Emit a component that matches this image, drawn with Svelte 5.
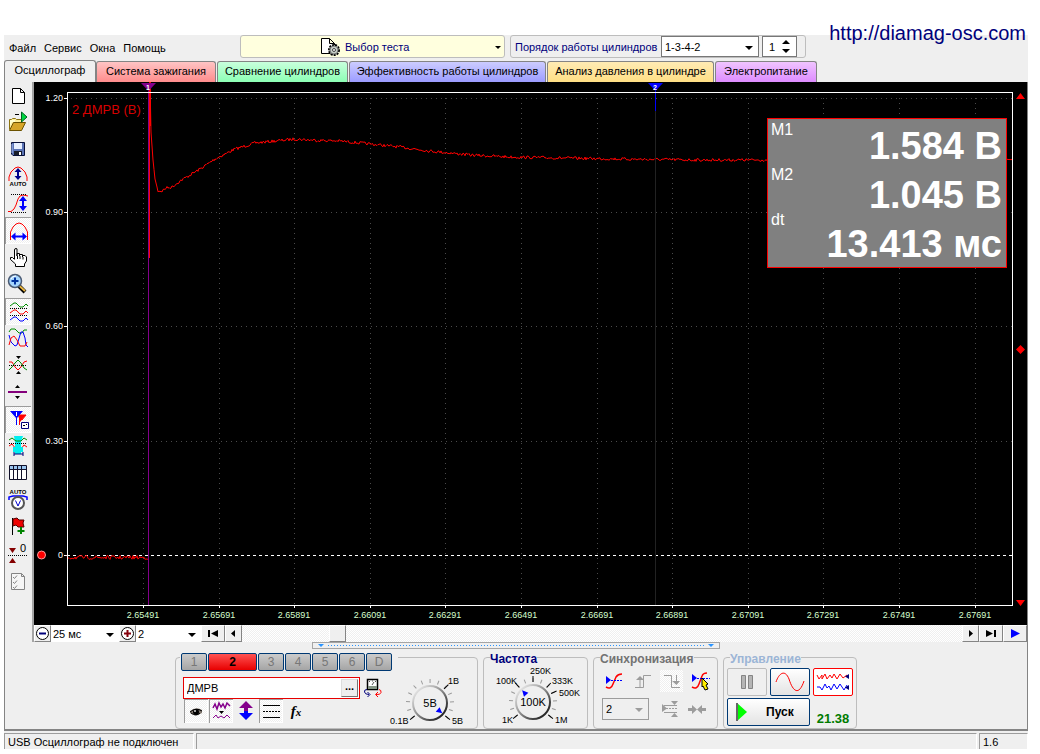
<script>
  const tabs = [
    { name: 'Осциллограф', top: '#efefef', bottom: '#efefef', width: 92 },
    { name: 'Система зажигания', top: '#ffc4c4', bottom: '#ff8c8c', width: 120 },
    { name: 'Сравнение цилиндров', top: '#c8ffdc', bottom: '#8cffb4', width: 131 },
    { name: 'Эффективность работы цилиндров', top: '#ccccff', bottom: '#9c9cff', width: 197 },
    { name: 'Анализ давления в цилиндре', top: '#ffebb4', bottom: '#ffdf84', width: 167 },
    { name: 'Электропитание', top: '#f0c4ff', bottom: '#de8cff', width: 102 }
  ];
  let activeTab = $state(0);

  // left toolbar, every icon on a 24x24 grid
  const tools = [
    { label: 'Новый', icon: '<path d="M6.500 5.500H14.500L18.500 9.500V20.500H6.500ZM14.500 5.500V9.500H18.500" fill="#fff" stroke="#000"/>' },
    { label: 'Открыть', icon: '<path d="M3.500 19.500V9.500H5.500L6.500 8.500H9.500L10.500 9.500H15.500V12.500" fill="#ffef9c" stroke="#8c7310"/><path d="M3.500 20.500L7.500 12.500H19.500L15.500 20.500Z" fill="#d6a529" stroke="#6b5200"/><path d="M4 10H9V12H6L4 16Z" fill="#ffffce"/><path d="M15.500 2V12L21 7Z" fill="#00d642" stroke="#006321"/><path d="M9 4.500H13" stroke="#000"/>' },
    { label: 'Сохранить', icon: '<path d="M5.500 5.500H18.500V18.500H7L5.500 17Z" fill="#5a73b5" stroke="#08103a"/><path d="M8 6H16V12H8Z" fill="#e7efff"/><path d="M8 14H16V18H8Z" fill="#181c29"/><path d="M13 15H15V18H13Z" fill="#fff"/><path d="M6 7V16" stroke="#a5bdf7"/>' },
    { label: 'Авто по амплитуде', icon: '<path d="M3 17V13L5 8L9 4L12 3L15 4L19 8L21 13V17" fill="none" stroke="#f00"/><path d="M12 5V15" stroke="#00008c" stroke-width="2"/><path d="M8.500 8L12 4L15.500 8ZM8.500 12L12 16L15.500 12Z" fill="#00008c"/><text x="12" y="22" font-size="6" font-weight="700" text-anchor="middle">AUTO</text>' },
    { label: 'Размах', icon: '<path d="M2 20.500H5L8 18L10 14L12 8L14 5L17 4L22 5" fill="none" stroke="#f00"/><path d="M5 3.500H20M5 21.500H20" stroke="#000" stroke-dasharray="1 1"/><path d="M17 7V18" stroke="#00f" stroke-width="2"/><path d="M13 10L17 5L21 10ZM13 15L17 20L21 15Z" fill="#00f"/>' },
    { label: 'Длительность', pressed: true, icon: '<path d="M4.500 22V14L7 9L10 6L13 5L16 6L19 9L21.500 14V22" fill="none" stroke="#f00"/><path d="M7 18.500H19" stroke="#00f" stroke-width="2"/><path d="M9.500 14.500L5 18.500L9.500 22.500ZM16.500 14.500L21 18.500L16.500 22.500Z" fill="#00f"/>' },
    { label: 'Рука', icon: '<path d="M8.500 14V5Q8.500 3.500 10 3.500T11 5V11V8.500H13.500V11V9.500H16.500V12V10.500H19L20.500 12V16L18.500 19V21.500H9.500V19L4.500 14.500V12.500H6.500L8.500 14.500M11.500 11V14M14 11V14M17 12V14.500" fill="#fff" stroke="#000"/>' },
    { label: 'Лупа', icon: '<path d="M13 14L19 20" stroke="#000" stroke-width="4"/><path d="M13.500 14L19 19" stroke="#e7b542" stroke-width="2"/><circle cx="9" cy="9" r="6.500" fill="#a5d6ff" stroke="#4a5a73" stroke-width="1.500"/><path d="M5 7Q6 4 10 4" stroke="#fff" fill="none"/><path d="M9 5.500V12.500M5.500 9H12.500" stroke="#00319c" stroke-width="2"/>' },
    { label: 'Каналы раздельно', pressed: true, icon: '<path d="M4 7L8 4H10L14 8H17L20 5L22 7" fill="none" stroke="#008c00"/><path d="M4 14L8 11H10L14 15H17L20 12L22 14" fill="none" stroke="#f00"/><path d="M4 21L8 18H10L14 22H17L20 19L22 21" fill="none" stroke="#00f"/><path d="M4 9.500H22M4 16.500H22" stroke="#000" stroke-dasharray="1 1"/>' },
    { label: 'Каналы вместе', icon: '<path d="M3 6L5 3H9L13 7H16L18 4H21" fill="none" stroke="#008c00"/><path d="M3 9L5 16L9 20L11 19L14 9L15 6H17L19 12L20 19L22 21" fill="none" stroke="#00f"/><path d="M3 19L5 12L8 10L11 14L14 20H19L21 16" fill="none" stroke="#f00"/>' },
    { label: 'Инверсия', icon: '<path d="M3 9H6L9 14L12 17L15 14L18 9L21 8" fill="none" stroke="#f00"/><path d="M3 17L6 14L9 10L12 7L15 10L18 15L21 17" fill="none" stroke="#008c00"/><path d="M3 12.500H21" stroke="#000" stroke-dasharray="1 1"/><path d="M10 3H15L12.500 6ZM10 21H15L12.500 18Z" fill="#000"/>' },
    { label: 'Смещение', icon: '<path d="M2 12H21" stroke="#84007b" stroke-width="2"/><path d="M9 8H14L11.500 5ZM9 16H14L11.500 19Z" fill="#000"/>' },
    { label: 'Метки', pressed: true, icon: '<path d="M12 8H20L16 13Z" fill="#fff" stroke="#f00"/><path d="M12 8H20L14 15Z" fill="#f00"/><path d="M4 4H17L11 11V18H10V11Z" fill="#00f"/><path d="M10.500 5V9" stroke="#fff"/><path d="M13.500 11V18" stroke="#f00"/><path d="M15.500 15.500H22.500V21.500H15.500Z" fill="#fff" stroke="#00007b"/><path d="M17 18.500H19M20 17.500H21" stroke="#000"/>' },
    { label: 'Область', icon: '<path d="M8 2H17L15 8V20H9V8Z" fill="#00efef"/><path d="M3 6L6 4L10 7H15L18 4L21 6" fill="none" stroke="#008c00"/><path d="M3 12L6 10L10 15H15L18 11L21 13" fill="none" stroke="#f00"/><path d="M3 9.500H21" stroke="#000" stroke-dasharray="1 1"/><path d="M7 13H17V18H7Z" fill="#00efef"/><path d="M8 18V22M17 18V22M8 20H17" stroke="#00007b"/>' },
    { label: 'Таблица', icon: '<path d="M3.500 4.500H20.500V18.500H3.500Z" fill="#fff" stroke="#101029"/><path d="M4 5H20V8H4Z" fill="#9cc6ef"/><path d="M3 8.500H21M7.500 5V18M11.500 5V18M15.500 5V18" stroke="#101029"/>' },
    { label: 'Авто', icon: '<text x="12" y="6" font-size="6" font-weight="700" text-anchor="middle">AUTO</text><path d="M3 12V9L7 8H17L21 9V12" fill="none" stroke="#00f" stroke-width="1.500"/><circle cx="12" cy="15" r="6" fill="#fff" stroke="#555" stroke-width="2"/><path d="M9.500 12.500L12 18L14.500 12.500" fill="none" stroke="#00c"/>' },
    { label: 'Флаг', icon: '<path d="M6.500 3V20" stroke="#000"/><path d="M7 4L11 3L13 5H18L17 8L18 12H12L10 10L7 11Z" fill="#ef0000" stroke="#520000"/><path d="M15 12V19M11.500 16H18.500" stroke="#008400" stroke-width="2"/>' },
    { label: 'Ноль', icon: '<path d="M3 6H10L6.500 11ZM3 21H10L6.500 16Z" fill="#840000"/><path d="M2 13.500H21" stroke="#000" stroke-dasharray="1 1"/><text x="14" y="10" font-size="11">0</text>' },
    { label: 'Отчёт', icon: '<path d="M5.500 4.500H15.500L18.500 7.500V20.500H5.500ZM15.500 4.500V7.500H18.500" fill="#f6f6f6" stroke="#848484"/><path d="M7 8L8.500 9.500L11 6.500M7 13L8.500 14.500L11 11.500M7 18L8.500 19.500L11 16.500" fill="none" stroke="#848484"/>' }
  ];

  // scope: 993x543 drawing, plot frame inside it
  const plot = { left: 33, right: 978, top: 10, bottom: 523 };
  const zeroY = 473;
  const yOf = (volts) => Math.round(zeroY - volts * 381);
  const levels = [
    { volts: 1.2, text: '1.20' },
    { volts: 0.9, text: '0.90' },
    { volts: 0.6, text: '0.60' },
    { volts: 0.3, text: '0.30' },
    { volts: 0, text: '0' }
  ];
  const times = Array.from({ length: 12 }, (_, i) => ({
    x: Math.round(109 + i * 75.6),
    text: (2.65491 + i * 0.002).toFixed(5)
  }));

  const envelope = [
    [116, 0], [117, 50], [119, 78], [121, 97], [124, 109], [128, 109], [132, 106], [138, 105],
    [146, 99], [156, 93], [166, 87], [181, 77], [201, 67], [221, 61], [241, 59], [261, 57],
    [276, 58], [306, 59], [336, 62], [366, 65], [396, 69], [436, 73], [476, 75], [526, 76],
    [586, 77], [666, 78], [978, 78]
  ];

  let seed = 7;
  function noise(amp) {
    seed = (seed * 16807) % 2147483647;
    return (seed / 2147483647 - 0.5) * amp;
  }

  function buildTrace() {
    const pts = [];
    let k = 0;
    for (let x = 116; x <= 978; x++) {
      while (k < envelope.length - 2 && envelope[k + 1][0] < x) k++;
      const [x0, y0] = envelope[k];
      const [x1, y1] = envelope[k + 1];
      const y = y0 + ((y1 - y0) * (x - x0)) / (x1 - x0);
      pts.push(`${x},${(y + noise(x < 124 ? 0 : 3)).toFixed(1)}`);
    }
    return pts.join(' ');
  }

  function buildIdle() {
    const pts = [];
    for (let x = 33; x <= 114; x++) pts.push(`${x},${(475.5 + noise(4)).toFixed(1)}`);
    return pts.join(' ');
  }

  const trace = buildTrace();
  const idle = buildIdle();

  const channels = ['1', '2', '3', '4', '5', '6', 'D'];
  let channel = $state('2');
  let channelName = $state('ДМРВ');
  let cylinder = $state(1);

  // knob ticks, degrees clockwise from the top
  const ticks = Array.from({ length: 13 }, (_, i) => -130 + i * 21.7);
  const rangeMajor = [-130, 45, 130];
  const freqMajor = [-130, -43, 0, 43, 65, 130];
</script>

{#snippet knob(cx, cy, major, pointer, value)}
  {#each ticks as a}
    <path d="M{cx} {cy - 20}V{cy - 24}" stroke="#999" transform="rotate({a} {cx} {cy})" />
  {/each}
  {#each major as a}
    <path d="M{cx} {cy - 20}V{cy - 26}" stroke="#000" transform="rotate({a} {cx} {cy})" />
  {/each}
  <circle {cx} {cy} r="17" fill="#efefef" stroke="url(#rim)" stroke-width="2" />
  <path d="M{cx - 3} {cy - 10}H{cx + 3}L{cx} {cy - 16}Z" fill="#00f" transform="rotate({pointer} {cx} {cy})" />
  <text x={cx} y={cy + 4} class="knob-value">{value}</text>
{/snippet}

<div class="page">
  <a class="site" href="http://diamag-osc.com">http://diamag-osc.com</a>

  <div class="window">
    <header>
      <nav class="menu" aria-label="Меню">
        <a href="#file">Файл</a>
        <a href="#service">Сервис</a>
        <a href="#windows">Окна</a>
        <a href="#help">Помощь</a>
      </nav>

      <div class="drop test">
        <svg class="test-icon" width="22" height="20" viewBox="0 0 22 20" aria-hidden="true">
          <path d="M1.500 1.500H9.500L14.500 6.500V16.500H1.500ZM9.500 1.500V6.500H14.500" fill="#fff" stroke="#000" />
          <circle cx="14" cy="13" r="5" fill="#bdc6bd" stroke="#000" stroke-width="2" stroke-dasharray="2 1" />
          <circle cx="14" cy="13" r="4" fill="#c6cec6" stroke="#777" />
          <circle cx="14" cy="13" r="1.500" fill="#fff" stroke="#444" />
        </svg>
        <select aria-label="Выбор теста"><option>Выбор теста</option></select>
      </div>

      <div class="order">
        <label for="order">Порядок работы цилиндров</label>
        <div class="drop boxed"><select id="order"><option>1-3-4-2</option></select></div>
        <div class="spinner">
          <input type="text" aria-label="Цилиндр" bind:value={cylinder} />
          <div class="spin-buttons">
            <button class="up" aria-label="Больше" onclick={() => cylinder++}></button>
            <button class="down" aria-label="Меньше" onclick={() => cylinder--}></button>
          </div>
        </div>
      </div>
    </header>

    <div class="tabs" role="tablist">
      {#each tabs as tab, i}
        <button
          role="tab"
          class:active={activeTab === i}
          aria-selected={activeTab === i}
          style="flex-basis: {tab.width}px; background: linear-gradient({tab.top}, {tab.bottom})"
          onclick={() => (activeTab = i)}>{tab.name}</button>
      {/each}
    </div>

    <main>
      <div class="work">
        <div class="toolbar" role="toolbar" aria-label="Инструменты">
          {#each tools as tool}
            <button class:pressed={tool.pressed} aria-label={tool.label}>
              <svg width="24" height="24" viewBox="0 0 24 24">{@html tool.icon}</svg>
            </button>
          {/each}
        </div>

        <div class="scope">
          <div class="screen">
            <svg class="graph" viewBox="0 0 993 543" role="img" aria-label="Осциллограмма">
              <g class="grid">
                {#each levels.slice(0, 4) as level}
                  <path d="M{plot.left + 4} {yOf(level.volts) + 0.5}H{plot.right}" />
                {/each}
                {#each times as time}
                  <path d="M{time.x + 0.5} 16V{plot.bottom}" />
                {/each}
              </g>
              <path class="zero" d="M{plot.left} {zeroY + 0.5}H{plot.right}" />

              {#each levels as level}
                <path d="M{plot.left - 3} {yOf(level.volts) + 0.5}H{plot.left}" stroke="#fff" />
                <text class="scale" x="29" y={yOf(level.volts) + 3} text-anchor="end">{level.text}</text>
              {/each}
              {#each times as time}
                <path d="M{time.x + 0.5} {plot.bottom}V{plot.bottom + 3}" stroke="#fff" />
                <text class="scale time" x={time.x} y="536" text-anchor="middle">{time.text}</text>
              {/each}

              <polyline class="trace" points={idle} />
              <polyline class="trace" points={trace} />
              <path d="M116 0V44" stroke="#f00" stroke-width="2" />
              <path d="M115.500 44V176" stroke="#f00" />
              <path d="M114.500 9V523" stroke="#84008c" />
              <path d="M621.500 22V523" stroke="#222" />
              <path d="M621.500 9V29" stroke="#00f" />

              <rect x="33.500" y="10.500" width="945" height="513" fill="none" stroke="#fff" />
              <text class="channel" x="38" y="32">2 ДМРВ (В)</text>

              <path d="M107 1H122L114.500 9Z" fill="#84008c" />
              <text class="marker" x="114" y="8">1</text>
              <path d="M614 1H629L621.500 9Z" fill="#00f" />
              <text class="marker" x="621" y="8">2</text>

              <path d="M982 17H991L986.500 11ZM982 518H991L986.500 524ZM982 267.500L986.500 263L991 267.500L986.500 272Z" fill="#f00" />
              <circle cx="7.500" cy="473" r="4" fill="#f00" stroke="#ff9c9c" />
            </svg>

            <div class="readout">
              <div class="names"><span>M1</span><span>M2</span><span>dt</span></div>
              <div class="values"><b>1.584 В</b><b>1.045 В</b><b>13.413 мс</b></div>
            </div>
          </div>

          <div class="timebar">
            <button aria-label="Уменьшить">
              <svg width="15" height="15" viewBox="0 0 15 15"><circle cx="7.500" cy="7.500" r="6" fill="#fff" stroke="#000" /><path d="M4 7.500H11" stroke="#00007b" stroke-width="2" /></svg>
            </button>
            <div class="drop sweep"><select aria-label="Развёртка"><option>25 мс</option></select></div>
            <button aria-label="Увеличить">
              <svg width="15" height="15" viewBox="0 0 15 15"><circle cx="7.500" cy="7.500" r="6" fill="#fff" stroke="#000" /><path d="M4 7.500H11M7.500 4V11" stroke="#84000b" stroke-width="2" /></svg>
            </button>
            <div class="drop factor"><select aria-label="Масштаб"><option>2</option></select></div>
            <button class="wide" aria-label="В начало">
              <svg width="12" height="9" viewBox="0 0 12 9"><path d="M1 1H3V8H1ZM11 1V8L4 4.500Z" /></svg>
            </button>
            <button aria-label="Назад">
              <svg width="9" height="9" viewBox="0 0 9 9"><path d="M6 1V8L2 4.500Z" /></svg>
            </button>
            <div class="track"><button class="thumb" aria-label="Прокрутка"></button></div>
            <button aria-label="Вперёд">
              <svg width="9" height="9" viewBox="0 0 9 9"><path d="M3 1V8L7 4.500Z" /></svg>
            </button>
            <button class="wide" aria-label="В конец">
              <svg width="12" height="9" viewBox="0 0 12 9"><path d="M9 1H11V8H9ZM1 1V8L8 4.500Z" /></svg>
            </button>
            <button class="wide" aria-label="Воспроизвести">
              <svg width="12" height="9" viewBox="0 0 12 9"><path d="M2 0V9L11 4.500Z" fill="#00f" /></svg>
            </button>
          </div>
        </div>
      </div>

      <div class="splitter"><i></i><span></span><i></i></div>

      <div class="panels">
        <section class="group input-group">
          <div class="channels">
            {#each channels as name}
              <button class:selected={channel === name} onclick={() => (channel = name)}>{name}</button>
            {/each}
          </div>
          <div class="input-body">
            <div>
              <div class="source">
                <div class="source-box">
                  <input type="text" aria-label="Имя канала" bind:value={channelName} />
                  <button aria-label="Выбрать датчик">...</button>
                </div>
                <svg width="22" height="22" viewBox="0 0 22 22" aria-hidden="true">
                  <path d="M5.500 2.500H15.500V12.500H5.500Z" fill="#fff" stroke="#000" stroke-width="1.500" />
                  <path d="M6 9H15V12H6Z" fill="#849484" />
                  <path d="M7 5L8 4M10 4H11M13 4L14 5M10 8L12 5" stroke="#555" />
                  <path d="M5 12.500Q2 12.500 2.500 15T7 17.500M5.500 15L8 17.500L5.500 20" fill="none" stroke="#00007b" />
                  <path d="M17 12.500Q19.500 13 19 15.500T14 17.500M16 15L13.500 17.500L16 20" fill="none" stroke="#f00" />
                </svg>
              </div>
              <div class="view-buttons">
                <button class="pressed" aria-label="Показать">
                  <svg width="22" height="22" viewBox="0 0 22 22"><path d="M5 11Q11 6 17 10V13Q11 17 5 13Z" fill="#847b73" /><path d="M5 12Q11 7 17 11M6 13Q11 17 15 13" fill="none" stroke="#000" /><circle cx="11" cy="12" r="3" fill="#000" /><circle cx="10" cy="11" r="1" fill="#ddd" /></svg>
                </button>
                <button class="pressed" aria-label="Фильтр">
                  <svg width="22" height="22" viewBox="0 0 22 22"><path d="M3 8L5 4L7 9L9 3L11 7L13 4L15 8L17 3L20 6" fill="none" stroke="#84008c" stroke-width="1.500" /><path d="M3 18L6 15L8 18L11 16L14 18L17 15L20 18" fill="none" stroke="#84008c" /><path d="M9 11H14L11.500 14Z" /></svg>
                </button>
                <button aria-label="По вертикали">
                  <svg width="22" height="22" viewBox="0 0 22 22"><path d="M11 1L18 8H13V11H9V8H4Z" fill="#84008c" /><path d="M11 20L18 13H13V11H9V13H4Z" fill="#00f" /></svg>
                </button>
                <button class="pressed" aria-label="Линии уровня">
                  <svg width="22" height="22" viewBox="0 0 22 22"><path d="M3 5.500H20M3 17.500H20" stroke="#000" /><path d="M3 11.500H20" stroke="#000" stroke-dasharray="2 1" /></svg>
                </button>
                <button class="fx" aria-label="Функция"><i>f<small>x</small></i></button>
              </div>
            </div>
            <svg class="range-knob" width="94" height="64" viewBox="0 0 94 64" role="img" aria-label="Диапазон 5В">
              <defs>
                <linearGradient id="rim" x1="0" y1="0" x2="1" y2="1">
                  <stop offset="0" stop-color="#fff" />
                  <stop offset="0.5" stop-color="#888" />
                  <stop offset="1" stop-color="#000" />
                </linearGradient>
              </defs>
              {@render knob(46, 34, rangeMajor, 130, '5В')}
              <text x="64" y="15">1В</text>
              <text x="68" y="55">5В</text>
              <text x="6" y="55">0.1В</text>
            </svg>
          </div>
        </section>

        <section class="group freq">
          <h2>Частота</h2>
          <svg width="100" height="64" viewBox="0 0 100 64" role="img" aria-label="Частота 100K">
            {@render knob(49, 36, freqMajor, -43, '100K')}
            <text x="46" y="8">250K</text>
            <text x="12" y="18">100K</text>
            <text x="68" y="18">333K</text>
            <text x="75" y="30">500K</text>
            <text x="71" y="57">1M</text>
            <text x="18" y="57">1K</text>
          </svg>
        </section>

        <section class="group sync">
          <h2>Синхронизация</h2>
          <div class="sync-row">
            <button aria-label="Уровень"><svg width="22" height="22" viewBox="0 0 22 22"><path d="M3 17Q8 20 10 14L13 7Q15 4 19 4" fill="none" stroke="#f00" stroke-width="1.500" /><path d="M3 6V14L8 10Z" fill="#00f" /><path d="M8 10.500H19" stroke="#00f" stroke-dasharray="2 1" /></svg></button>
            <button aria-label="Фронт"><svg width="22" height="22" viewBox="0 0 22 22"><path d="M3 17.500H11.500V5.500H19M8 18V9" fill="none" stroke="#9c9c9c" /><path d="M4 10H12L8 6Z" fill="#9c9c9c" /></svg></button>
            <button class="checker" aria-label="Спад"><svg width="22" height="22" viewBox="0 0 22 22"><path d="M3 5.500H10.500V17.500H19M15.500 5V13" fill="none" stroke="#9c9c9c" /><path d="M11 11H19L15.500 15Z" fill="#9c9c9c" /></svg></button>
            <button aria-label="Автоуровень"><svg width="22" height="22" viewBox="0 0 22 22"><path d="M2 17Q7 20 9 14L12 6Q13 3 17 3" fill="none" stroke="#f00" stroke-width="1.500" /><path d="M2 4V12L7 8Z" fill="#00f" /><path d="M7 8.500H20" stroke="#00f" stroke-dasharray="2 1" /><path d="M12 8L18 14L16 15L18 19L15 20L13 16L12 17Z" fill="#ffef00" stroke="#000" /></svg></button>
          </div>
          <div class="sync-row lower">
            <div class="drop sync-drop"><select aria-label="Канал синхронизации" disabled><option>2</option></select></div>
            <button aria-label="По уровню"><svg width="22" height="22" viewBox="0 0 22 22"><path d="M3 6V14L8 10.500ZM12 3H19L15.500 7ZM12 19H19L15.500 15Z" fill="#9c9c9c" /><path d="M5 7.500H18M5 14.500H18" stroke="#9c9c9c" /><path d="M7 10.500H19" stroke="#9c9c9c" stroke-dasharray="2 1" /></svg></button>
            <button aria-label="По центру"><svg width="22" height="22" viewBox="0 0 22 22"><path d="M2 10H6V7L11 11.500L16 7V10H20V13H16V16L11 11.500L6 16V13H2Z" fill="#9c9c9c" /></svg></button>
          </div>
        </section>

        <section class="group control">
          <h2>Управление</h2>
          <div class="control-grid">
            <button class="off" aria-label="Пауза"><svg width="14" height="16" viewBox="0 0 14 16"><path d="M1.500 1.500H5.500V14.500H1.500ZM8.500 1.500H12.500V14.500H8.500Z" fill="#b5b5b5" stroke="#848484" /></svg></button>
            <button aria-label="Сигнал"><svg width="30" height="20" viewBox="0 0 30 20"><path d="M1 10C4 1 10 -3 14 7C18 20 24 24 29 9" fill="none" stroke="#f00" /></svg></button>
            <button class="red" aria-label="Самописец"><svg width="34" height="20" viewBox="0 0 34 20"><path d="M1 3L3 7L6 3V7L9 2L11 7L14 3L16 6L18 2L21 7L24 2L27 6L31 3" fill="none" stroke="#f00" /><path d="M1 15H4L6 18L9 12L11 16L13 14L15 18L18 12L21 17L24 12L26 15L28 18L31 13" fill="none" stroke="#00f" /><path d="M33 2V7L29 4.500ZM33 13V18L29 15.500Z" fill="#00007b" /></svg></button>
            <button class="start"><svg width="12" height="20" viewBox="0 0 12 20"><path d="M1 1L11 10L1 19Z" fill="#0f0" /><path d="M1 1V19" stroke="#666" stroke-width="2" /></svg>Пуск</button>
            <output>21.38</output>
          </div>
        </section>
      </div>
    </main>

    <footer>
      <span class="device">USB Осциллограф не подключен</span>
      <span class="message"></span>
      <span class="version">1.6</span>
    </footer>
  </div>
</div>

<style>
  :global(body) {
    margin: 0;
    background: #fff;
  }

  .page {
    position: relative;
    padding: 35px 12px 4px 4px;
    font: 11px/14px 'Liberation Sans', Arial, sans-serif;
    color: #000;
  }

  button,
  input,
  select {
    font: inherit;
    color: inherit;
    margin: 0;
    padding: 0;
    border: 0;
    background: none;
    border-radius: 0;
    box-sizing: border-box;
  }

  button {
    display: flex;
    align-items: center;
    justify-content: center;
  }

  a {
    color: inherit;
    text-decoration: none;
  }

  svg {
    display: block;
    flex: none;
  }

  .site {
    position: absolute;
    top: 21px;
    right: 14px;
    font-size: 20px;
    line-height: 24px;
    color: #00007b;
  }

  .window {
    background: #efefef;
  }

  /* header */
  header {
    display: flex;
    height: 25px;
  }

  .menu {
    display: flex;
    gap: 8px;
    width: 231px;
    padding: 6px 0 0 5px;
  }

  .drop {
    position: relative;
    box-sizing: border-box;
  }

  .drop::after {
    content: '';
    position: absolute;
    right: 5px;
    top: 50%;
    margin-top: -1px;
    border: 4px solid transparent;
    border-top-color: #000;
    border-bottom: 0;
    pointer-events: none;
  }

  .drop select {
    appearance: none;
    width: 100%;
    height: 100%;
    padding-left: 3px;
    opacity: 1;
  }

  .test {
    width: 265px;
    height: 23px;
    background: #ffffde;
    border: 1px solid #bdbdbd;
    border-radius: 3px;
    color: #00007b;
  }

  .test select {
    padding-left: 104px;
  }

  .test::after {
    right: 3px;
    border-width: 3px;
    border-bottom: 0;
  }

  .test-icon {
    position: absolute;
    left: 79px;
    top: 1px;
  }

  .order {
    display: flex;
    align-items: center;
    width: 296px;
    height: 23px;
    margin-left: 5px;
    box-sizing: border-box;
    border: 1px solid #bdbdbd;
    border-radius: 3px;
  }

  .order label {
    flex: 1;
    padding-left: 4px;
    color: #00007b;
    white-space: nowrap;
  }

  .boxed {
    width: 98px;
    height: 21px;
    border: 1px solid #777;
    background: #fff;
  }

  .spinner {
    display: flex;
    width: 35px;
    height: 21px;
    margin: 0 8px 0 3px;
    box-sizing: border-box;
    border: 1px solid #777;
    background: #fff;
  }

  .spinner input {
    width: 18px;
    padding-left: 6px;
  }

  .spin-buttons {
    display: flex;
    flex-direction: column;
    justify-content: center;
    gap: 5px;
    padding-left: 1px;
  }

  .up,
  .down {
    border: 4px solid transparent;
    width: 8px;
    height: 4px;
  }

  .up {
    border-top: 0;
    border-bottom-color: #000;
  }

  .down {
    border-bottom: 0;
    border-top-color: #000;
  }

  /* tabs */
  .tabs {
    display: flex;
    align-items: flex-end;
    gap: 1px;
    height: 22px;
  }

  .tabs button {
    height: 21px;
    padding-bottom: 2px;
    border: 1px solid #848484;
    border-bottom: 0;
    border-radius: 3px 3px 0 0;
    white-space: nowrap;
  }

  .tabs button.active {
    height: 22px;
    margin-right: -1px;
    padding-bottom: 3px;
  }

  /* work area */
  main {
    border-bottom: 2px solid #848484;
    border-right: 1px solid #848484;
    border-left: 1px solid #848484;
  }

  .work {
    display: flex;
  }

  .toolbar {
    flex: none;
    width: 27px;
    padding-bottom: 47px;
    border-right: 2px solid #a5a5a5;
  }

  .toolbar button {
    width: 26px;
    height: 27px;
    padding-bottom: 1px;
  }

  .checker,
  .pressed {
    background: repeating-conic-gradient(#fff 0 25%, #efefef 0 50%) 0 0 / 2px 2px;
  }

  .pressed {
    box-shadow: inset 1px 1px #9c9c9c, inset -1px -1px #fff;
  }

  .scope {
    flex: 1;
    min-width: 0;
  }

  .screen {
    position: relative;
    background: #000;
  }

  .graph {
    width: 100%;
    height: auto;
  }

  .grid path {
    stroke: #4a4a4a;
    stroke-dasharray: 1 4;
  }

  .zero {
    stroke: #fff;
    stroke-dasharray: 3 3;
  }

  .trace {
    fill: none;
    stroke: #f00;
  }

  .scale {
    font-size: 9px;
    fill: #fff;
  }

  .time {
    fill: #d6ffce;
  }

  .channel {
    font-size: 13px;
    fill: #d60000;
  }

  .marker {
    font-size: 7px;
    font-weight: 700;
    fill: #fff;
    text-anchor: middle;
  }

  .readout {
    position: absolute;
    top: 36px;
    right: 20px;
    display: flex;
    justify-content: space-between;
    width: 240px;
    height: 150px;
    box-sizing: border-box;
    padding: 0 4px 0 3px;
    background: #808080;
    border: 1px solid #f00;
    color: #fff;
  }

  .names,
  .values {
    display: flex;
    flex-direction: column;
  }

  .names {
    padding-top: 1px;
    font-size: 16px;
    line-height: 20px;
    gap: 25px;
  }

  .values {
    align-items: flex-end;
    padding-top: 3px;
    font-size: 38px;
    line-height: 49px;
    white-space: nowrap;
  }

  .timebar {
    display: flex;
    height: 17px;
    background: #fff;
  }

  .timebar > button,
  .thumb {
    flex: none;
    width: 17px;
    height: 17px;
    background: #efefef;
    border: 1px solid #fff;
    border-right-color: #848484;
    border-bottom-color: #848484;
  }

  .timebar > .wide {
    width: 24px;
  }

  .sweep {
    width: 68px;
  }

  .factor {
    width: 65px;
  }

  .timebar select {
    padding-left: 2px;
  }

  .track {
    flex: 1;
    padding-left: 87px;
    background: repeating-conic-gradient(#fff 0 25%, #efefef 0 50%) 0 0 / 2px 2px;
  }

  .splitter {
    display: flex;
    align-items: center;
    gap: 4px;
    width: 408px;
    height: 7px;
    margin-left: 307px;
    padding: 0 5px;
    box-sizing: border-box;
    border: 1px solid #a5a5a5;
  }

  .splitter span {
    flex: 1;
    height: 1px;
    background: repeating-linear-gradient(90deg, #2994ff 0 1px, transparent 1px 3px);
  }

  .splitter i {
    border: 3px solid transparent;
    border-top-color: #2994ff;
    border-bottom: 0;
  }

  /* bottom panels */
  .panels {
    display: flex;
    gap: 5px;
    padding: 8px 0 0 170px;
  }

  .group {
    box-sizing: border-box;
    height: 72px;
    border: 1px solid #bdbdbd;
    border-radius: 4px;
  }

  h2 {
    width: max-content;
    margin: -6px 0 0 6px;
    background: #efefef;
    font-size: 12px;
    line-height: 14px;
  }

  .group text {
    font-size: 9px;
  }

  .group .knob-value {
    font-size: 11px;
    text-anchor: middle;
  }

  .input-group {
    width: 303px;
  }

  .channels {
    display: flex;
    gap: 1px;
    width: max-content;
    margin: -5px 0 0 4px;
    padding: 0 6px 0 1px;
    background: #efefef;
  }

  .channels button {
    width: 26px;
    height: 18px;
    border: 1px solid #003973;
    border-radius: 2px;
    background: linear-gradient(#ccc, #a5a5a5);
    color: #777;
    font-size: 12px;
  }

  .channels .selected {
    width: 49px;
    background: linear-gradient(#ff5252, #e70000);
    color: #000;
    font-weight: 700;
  }

  .input-body {
    display: flex;
    height: 52px;
  }

  .source {
    display: flex;
    align-items: center;
    gap: 2px;
    padding: 6px 0 0 7px;
  }

  .source-box {
    display: flex;
    width: 177px;
    height: 22px;
    box-sizing: border-box;
    border: 1px solid #e70000;
    background: #fff;
  }

  .source-box input {
    flex: 1;
    min-width: 0;
    padding-left: 3px;
    font-size: 11px;
  }

  .source-box button {
    width: 17px;
    margin: 1px;
    background: #efefef;
    border: 1px solid #ddd;
    border-right-color: #777;
    border-bottom-color: #777;
    font-weight: 700;
    line-height: 8px;
    padding-bottom: 4px;
  }

  .view-buttons {
    display: flex;
    gap: 1px;
    padding-left: 8px;
  }

  .view-buttons button {
    width: 24px;
    height: 24px;
  }

  .fx {
    font: 700 15px/18px 'Liberation Serif', serif;
  }

  .fx small {
    font-size: 11px;
  }

  .range-knob {
    margin-top: -2px;
  }

  .freq {
    width: 105px;
  }

  .freq h2 {
    color: #00007b;
  }

  .sync {
    width: 125px;
  }

  .sync h2 {
    color: #737373;
  }

  .sync-row {
    display: flex;
    gap: 6px;
    padding: 4px 0 0 8px;
  }

  .sync-row button {
    width: 23px;
    height: 22px;
  }

  .lower {
    gap: 4px;
    padding-top: 6px;
  }

  .sync-drop {
    width: 47px;
    height: 22px;
    margin-right: 5px;
    border: 1px solid #9c9c9c;
  }

  .sync-drop::after {
    border-top-color: #9c9c9c;
  }

  .control {
    width: 134px;
  }

  .control h2 {
    color: #9cb5d6;
  }

  .control-grid {
    display: grid;
    grid-template-columns: 40px 40px 40px;
    grid-template-rows: 28px 28px;
    gap: 2px 3px;
    padding: 2px 3px 0;
  }

  .control-grid button {
    border: 1px solid #003973;
    border-radius: 2px;
    background: linear-gradient(#fff, #e3e3e3);
  }

  .control-grid .off {
    border-color: #bdbdbd;
    background: #efefef;
  }

  .control-grid .red {
    border-color: #f00;
    background: #fff;
  }

  .control-grid .start {
    grid-column: span 2;
    justify-content: flex-start;
    gap: 18px;
    padding-left: 8px;
    font-size: 12px;
    font-weight: 700;
  }

  output {
    align-self: end;
    justify-self: center;
    font-size: 13px;
    font-weight: 700;
    color: #007b00;
  }

  /* status bar */
  footer {
    display: flex;
    gap: 2px;
    padding-top: 2px;
  }

  footer span {
    height: 16px;
    box-sizing: border-box;
    padding: 1px 0 0 3px;
    border: 1px solid #9c9c9c;
    border-right-color: #fff;
    border-bottom: 0;
  }

  .device {
    width: 190px;
  }

  .message {
    flex: 1;
  }

  .version {
    width: 49px;
  }
</style>
